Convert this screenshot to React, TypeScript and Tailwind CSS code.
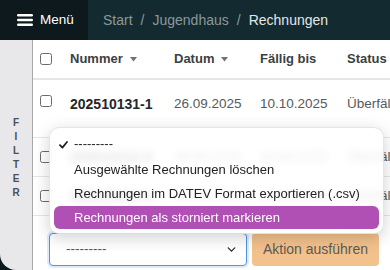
import { ChevronDown } from "lucide-react";

const ROWS = [
  { nr: "202510131-1", datum: "26.09.2025", faellig: "10.10.2025", status: "Überfällig", tall: true },
  { nr: "202510131-2", datum: "26.09.2025", faellig: "10.10.2025", status: "Überfällig", tall: false },
  { nr: "202510131-3", datum: "26.09.2025", faellig: "10.10.2025", status: "Überfällig", tall: false },
  { nr: "202510131-4", datum: "26.09.2025", faellig: "10.10.2025", status: "Überfällig", tall: false },
];

const ACTIONS = [
  "Ausgewählte Rechnungen löschen",
  "Rechnungen im DATEV Format exportieren (.csv)",
];

function Checkbox() {
  return <span className="block h-3 w-3 rounded-[2.5px] border border-[#6b6b6b] bg-white" />;
}

function SortArrow() {
  return (
    <svg width="7" height="5" viewBox="0 0 7 5" className="ml-[7px]">
      <path d="M0 0h7L3.5 4.5z" fill="#6b7280" />
    </svg>
  );
}

export default function App() {
  return (
    <div className="flex h-[270px] w-[390px] flex-col overflow-hidden bg-[#0e1b1e] font-['Liberation_Sans',Arial,sans-serif]">
      {/* Top bar */}
      <header className="flex h-10 shrink-0">
        <button className="flex w-[88px] items-center gap-[7px] bg-[#0d191c] pl-[17px] text-[13.5px] text-white">
          <svg width="16" height="12" viewBox="0 0 16 12">
            <rect x="0" y="0" width="16" height="2.4" rx="1.2" fill="#fff" />
            <rect x="0" y="4.8" width="16" height="2.4" rx="1.2" fill="#fff" />
            <rect x="0" y="9.6" width="16" height="2.4" rx="1.2" fill="#fff" />
          </svg>
          Menü
        </button>
        <nav className="flex flex-1 items-center bg-[#132a30] pl-[15px] text-[14px]">
          <span className="text-[#8c989c]">Start</span>
          <span className="mx-[8px] text-[#8c989c]">/</span>
          <span className="text-[#8c989c]">Jugendhaus</span>
          <span className="mx-[8px] text-[#8c989c]">/</span>
          <span className="text-[#e4e7e8]">Rechnungen</span>
        </nav>
      </header>

      <div className="flex min-h-0 flex-1">
        {/* Filter sidebar */}
        <aside className="flex w-[33px] shrink-0 flex-col items-center justify-center rounded-bl-2xl border-r border-[#a8a8a8] bg-[#e8e8eb] pt-[6px]">
          {"FILTER".split("").map((l, i) => (
            <span key={i} className="text-[10px] leading-[14px] font-bold text-[#4b5055]">
              {l}
            </span>
          ))}
        </aside>

        {/* Table area */}
        <main className="relative flex-1 overflow-hidden bg-white">
          <div className="w-[420px] whitespace-nowrap">
            <div className="flex h-10 items-center border-b-2 border-[#e6e6e6] text-[13px] font-bold text-[#3a3f44]">
              <div className="w-[37px] pl-[7px]">
                <Checkbox />
              </div>
              <div className="flex w-[104px] items-center">
                Nummer
                <SortArrow />
              </div>
              <div className="flex w-[86px] items-center">
                Datum
                <SortArrow />
              </div>
              <div className="w-[87px]">Fällig bis</div>
              <div>Status</div>
            </div>

            {ROWS.map((r) => (
              <div
                key={r.nr}
                className={`flex border-b border-[#e6e6e6] text-[13.5px] text-[#555a5e] ${
                  r.tall ? "h-[58px] items-start pt-[14px]" : "h-[39px] items-center"
                }`}
              >
                <div className={`w-[37px] pl-[7px] ${r.tall ? "pt-px" : ""}`}>
                  <Checkbox />
                </div>
                <div className="w-[104px] text-[14px] font-bold text-[#22272b]">{r.nr}</div>
                <div className="w-[86px]">{r.datum}</div>
                <div className="w-[87px]">{r.faellig}</div>
                <div>{r.status}</div>
              </div>
            ))}
          </div>

          {/* Action bar */}
          <div className="absolute bottom-0 left-0 right-0 flex h-[41px] items-start gap-[5px] bg-white pl-4 pt-1">
            <div className="flex h-[33px] w-[198px] items-center justify-between rounded-[4px] border border-[#4f93e3] bg-white pl-[16px] pr-[8px] shadow-[0_0_0_2px_rgba(79,147,227,0.18)]">
              <span className="text-[13.5px] text-[#555]">---------</span>
              <ChevronDown size={13} strokeWidth={2.6} color="#333" />
            </div>
            <button className="h-[33px] w-[127px] rounded-[4px] bg-[#f2c18c] text-[14px] text-[#5d5955]">
              Aktion ausführen
            </button>
          </div>

          {/* Dropdown popup */}
          <div className="absolute left-4 top-[87px] w-[335px] rounded-[10px] border border-black/10 bg-white/85 px-1 pt-[4px] pb-[4px] shadow-[0_4px_16px_rgba(0,0,0,0.18)] backdrop-blur-[4px]">
            <div className="relative flex h-6 items-center pl-5 text-[13px] text-[#222]">
              <svg width="9" height="8" viewBox="0 0 9 8" className="absolute left-[5px] top-[9px]">
                <path d="M1 4.2L3.4 6.6L8 1" fill="none" stroke="#222" strokeWidth="1.8" strokeLinecap="round" strokeLinejoin="round" />
              </svg>
              ---------
            </div>
            {ACTIONS.map((a) => (
              <div key={a} className="flex h-[24.5px] items-center pt-[2px] pl-5 text-[13px] text-[#222]">
                {a}
              </div>
            ))}
            <div className="mt-[1px] flex h-[23px] items-center rounded-[6px] bg-[#b04fb4] pl-5 text-[13px] text-white">
              Rechnungen als storniert markieren
            </div>
          </div>
        </main>
      </div>
    </div>
  );
}
